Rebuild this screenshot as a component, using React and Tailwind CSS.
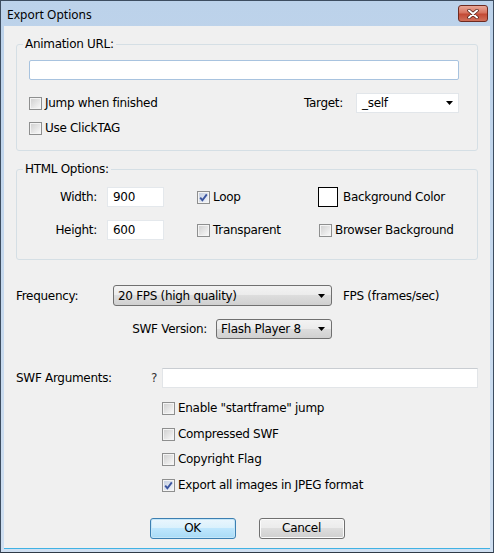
import React from 'react';

const Arrow = () => (
  <svg width="7" height="4" viewBox="0 0 7 4" className="shrink-0">
    <path d="M0 0h7L3.5 4z" fill="#000" />
  </svg>
);

const CheckBox = ({ checked }) => (
  <span className="flex h-[13px] w-[13px] shrink-0 border border-[#8e8f8f] bg-[#f4f4f4] p-[1px]">
    <span
      className={`flex flex-1 items-center justify-center bg-gradient-to-br ${
        checked ? 'from-[#c6d0e2] to-[#f1f4f9]' : 'from-[#d2d2d2] to-[#f7f7f7]'
      }`}
    >
      {checked && (
        <svg width="9" height="9" viewBox="0 0 9 9">
          <path d="M1.2 4.6L3.4 7.2L7.8 1.4" fill="none" stroke="#3b55a0" strokeWidth="1.9" />
        </svg>
      )}
    </span>
  </span>
);

const CheckRow = ({ checked, label, className = '' }) => (
  <div className={`flex h-[14px] items-center gap-[3px] ${className}`}>
    <CheckBox checked={checked} />
    <span className="whitespace-nowrap leading-[14px]">{label}</span>
  </div>
);

const Dropdown = ({ value, className = '' }) => (
  <div
    className={`flex items-center justify-between rounded-[3px] border border-[#707070] bg-[linear-gradient(#f3f3f3,#ebebeb_50%,#dddddd_50%,#d0d0d0)] pl-[4px] pr-[6px] ${className}`}
  >
    <span className="whitespace-nowrap">{value}</span>
    <Arrow />
  </div>
);

const TextBox = ({ value = '', className = '' }) => (
  <div className={`flex items-center bg-white pl-[5px] ${className}`}>{value}</div>
);

const Button = ({ children, primary }) => (
  <button
    className={`h-[21px] w-[86px] rounded-[3px] border text-center leading-[19px] ${
      primary
        ? 'border-[#3c7fb1] bg-[linear-gradient(#eaf6fd,#d9f0fc_50%,#bee6fd_50%,#a9dbf6)] shadow-[inset_0_0_0_1px_#c5e6f8]'
        : 'border-[#707070] bg-[linear-gradient(#f2f2f2,#ebebeb_50%,#dddddd_50%,#cfcfcf)] shadow-[inset_0_0_0_1px_#fbfbfb]'
    }`}
  >
    {children}
  </button>
);

export default function App() {
  return (
    <div className="flex h-[553px] w-[494px] flex-col border border-[#3d4d60] border-b-[#2f3a47] bg-[linear-gradient(#bcd2ea,#cfdff1)] text-[12px] tracking-[-0.3px] text-black [font-family:'DejaVu_Sans',sans-serif]">
      {/* title bar */}
      <div className="flex h-[25px] items-center justify-between pl-[6px] pr-[5px]">
        <span className="pt-[2px] text-[12px] tracking-normal [font-family:'Noto_Sans',sans-serif]">Export Options</span>
        <div className="flex h-[17px] w-[30px] items-center justify-center rounded-[3px] border border-[#6e2a20] bg-[linear-gradient(#e9a898,#d7735f_45%,#c34a35_55%,#d0705a)]">
          <svg width="12" height="10" viewBox="0 0 12 10">
            <path d="M2 1.5L10 8.5M10 1.5L2 8.5" stroke="#4a1a12" strokeWidth="3.4" strokeLinecap="round" />
            <path d="M2 1.5L10 8.5M10 1.5L2 8.5" stroke="#fff" strokeWidth="2" strokeLinecap="round" />
          </svg>
        </div>
      </div>

      {/* client area */}
      <div className="mx-[3px] mb-[3px] flex flex-1 flex-col border-b border-[#40b2e4] bg-[#f0f0f0] px-[12px]">
        <fieldset className="mt-[11px] rounded-[3px] border border-[#d5dfe5]">
          <legend className="ml-[6px] px-[2px] leading-[14px]">Animation URL:</legend>
          <div className="pb-[15px] pl-[12px] pr-[18px]">
            <div className="mt-[9px] h-[20px] rounded-[2px] border border-[#a8c3df] bg-white" />
            <div className="mt-[13px] flex h-[20px] items-center justify-between">
              <CheckRow label="Jump when finished" />
              <div className="flex items-center gap-[13px]">
                <span>Target:</span>
                <div className="flex h-[20px] w-[103px] items-center justify-between border border-[#e2e6ea] bg-white pl-[5px] pr-[5px]">
                  <span>_self</span>
                  <Arrow />
                </div>
              </div>
            </div>
            <CheckRow label="Use ClickTAG" className="mt-[8px]" />
          </div>
        </fieldset>

        <fieldset className="mt-[11px] rounded-[3px] border border-[#d5dfe5]">
          <legend className="ml-[6px] px-[2px] leading-[14px]">HTML Options:</legend>
          <div className="pb-[19px]">
            <div className="mt-[11px] flex h-[20px] items-center">
              <span className="w-[80px] text-right">Width:</span>
              <TextBox value="900" className="ml-[10px] h-[20px] w-[57px] border border-[#e4e8ec]" />
              <div className="ml-[33px] w-[121px]">
                <CheckRow checked label="Loop" />
              </div>
              <div className="flex items-center gap-[5px]">
                <span className="h-[20px] w-[20px] border border-black bg-white" />
                <span>Background Color</span>
              </div>
            </div>
            <div className="mt-[13px] flex h-[20px] items-center">
              <span className="w-[80px] text-right">Height:</span>
              <TextBox value="600" className="ml-[10px] h-[20px] w-[57px] border border-[#e4e8ec]" />
              <div className="ml-[33px] w-[121px]">
                <CheckRow label="Transparent" />
              </div>
              <CheckRow label="Browser Background" className="ml-[1px]" />
            </div>
          </div>
        </fieldset>

        <div className="mt-[25px] flex h-[21px] items-center">
          <span className="w-[97px]">Frequency:</span>
          <Dropdown value="20 FPS (high quality)" className="h-[21px] w-[219px]" />
          <span className="ml-[11px]">FPS (frames/sec)</span>
        </div>

        <div className="mt-[13px] flex h-[20px] w-[316px] items-center justify-end">
          <span>SWF Version:</span>
          <Dropdown value="Flash Player 8" className="ml-[9px] h-[20px] w-[116px]" />
        </div>

        <div className="mt-[29px] flex h-[20px] items-center">
          <span className="w-[135px]">SWF Arguments:</span>
          <span className="w-[11px] text-[#333]">?</span>
          <div className="h-[20px] flex-1 border border-[#e2e5e8] border-t-[#c9cdd2] bg-white" />
        </div>

        <div className="ml-[146px] flex flex-col">
          <CheckRow label={'Enable "startframe" jump'} className="mt-[13px]" />
          <CheckRow label="Compressed SWF" className="mt-[12px]" />
          <CheckRow label="Copyright Flag" className="mt-[11px]" />
          <CheckRow checked label="Export all images in JPEG format" className="mt-[12px]" />
        </div>

        <div className="mt-[26px] flex justify-center gap-[23px]">
          <Button primary>OK</Button>
          <Button>Cancel</Button>
        </div>
      </div>
    </div>
  );
}
